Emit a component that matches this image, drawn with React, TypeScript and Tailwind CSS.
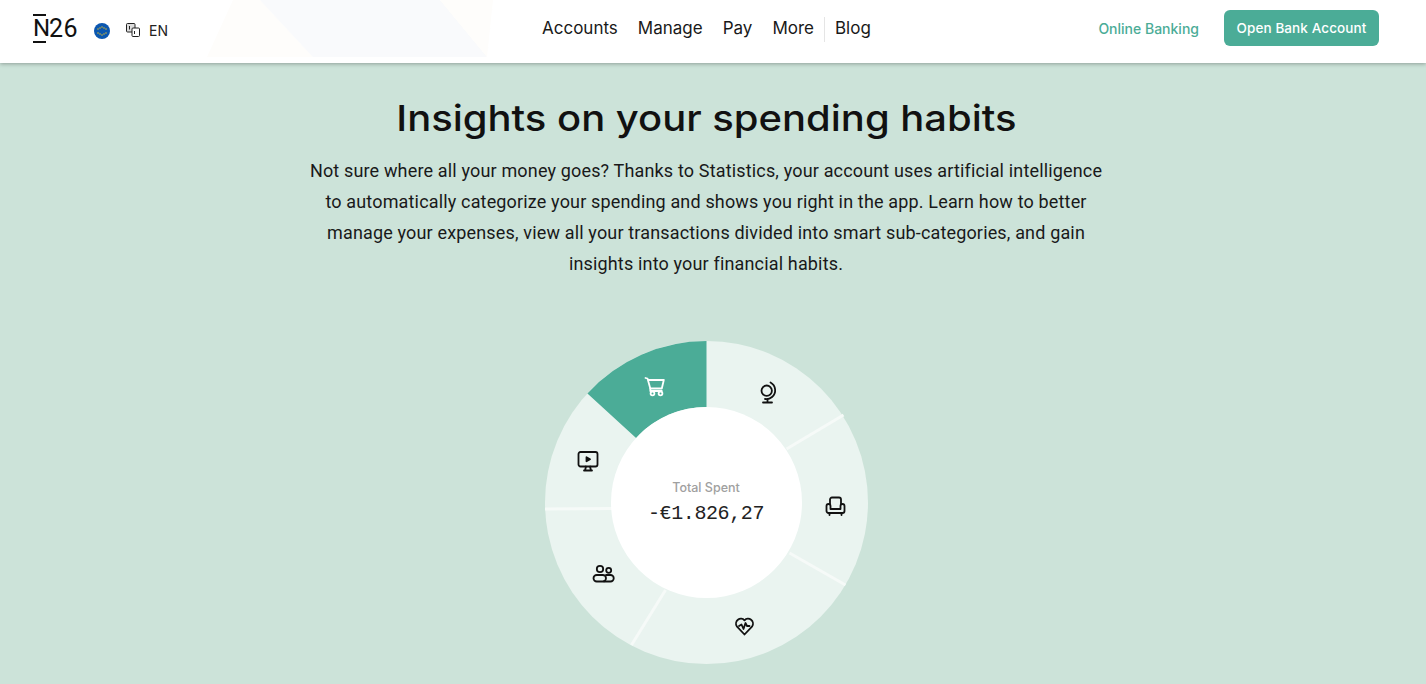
import { ReactNode } from "react"

const CX = 161.5
const CY = 161.5
const OUTER = 161.5
const INNER = 95.5

function pt(r: number, deg: number) {
    const a = ((deg - 90) * Math.PI) / 180
    return `${(CX + r * Math.cos(a)).toFixed(2)} ${(CY + r * Math.sin(a)).toFixed(2)}`
}

function wedge(from: number, to: number) {
    const large = to - from > 180 ? 1 : 0
    return `M${pt(OUTER, from)} A${OUTER} ${OUTER} 0 ${large} 1 ${pt(OUTER, to)} L${pt(INNER, to)} A${INNER} ${INNER} 0 ${large} 0 ${pt(INNER, from)} Z`
}

const dividers = [
    [298.5, 74, 241.5, 108],
    [300.5, 244, 244.5, 212],
    [86.5, 304, 120.5, 249],
    [0, 168, 67, 167.5],
]

function Donut() {
    return (
        <svg width="323" height="323" viewBox="0 0 323 323" className="block">
            <circle cx={CX} cy={CY} r={OUTER} fill="#eaf4f0" />
            <path d={wedge(312.5, 360)} fill="#4bac97" />
            {dividers.map((d) => (
                <line key={d[0]} x1={d[0]} y1={d[1]} x2={d[2]} y2={d[3]} stroke="#f6faf8" strokeWidth="3" />
            ))}
            <circle cx={CX} cy={CY} r={INNER} fill="#fff" />
        </svg>
    )
}

function Icon({ className, children }: { className: string; children: ReactNode }) {
    return (
        <svg
            width="26"
            height="26"
            viewBox="0 0 26 26"
            fill="none"
            stroke="currentColor"
            strokeWidth="1.8"
            strokeLinecap="round"
            strokeLinejoin="round"
            className={`absolute ${className}`}
        >
            {children}
        </svg>
    )
}

function EuFlag() {
    const stars = [-4, -2, 0, 2, 4]
    return (
        <svg width="16" height="16" viewBox="0 0 16 16">
            <circle cx="8" cy="8" r="8" fill="#0b57b0" />
            {stars.map((s) => (
                <g key={s} fill="#c9b53a">
                    <circle cx={8 + s} cy={s === 0 ? 4 : 8 - (4 - Math.abs(s)) / 2 - 2} r="0.8" />
                    <circle cx={8 + s} cy={s === 0 ? 12 : 8 + (4 - Math.abs(s)) / 2 + 2} r="0.8" />
                </g>
            ))}
        </svg>
    )
}

export default function App() {
    return (
        <div className="h-[684px] overflow-hidden bg-[#cce3d9] font-['Inter',sans-serif] text-[#111]">
            <header className="relative z-10 flex h-[63px] items-center bg-white pb-[7px] pl-[33px] pr-[47px] shadow-[0_1px_4px_rgba(0,0,0,0.3)]">
                <svg width="290" height="57" viewBox="0 0 290 57" className="absolute left-[207px] top-0">
                    <path d="M0 57 L26 0 H53 L106 57 Z" fill="#fefdfb" />
                    <path d="M53 0 L106 57 H280 L233 0 Z" fill="#f9fafc" />
                    <path d="M233 0 H286 L280 57 Z" fill="#fefdfb" />
                </svg>
                <div className="relative flex w-[509px] items-center">
                    <div className="flex items-center">
                        <span className="w-[13px] border-y-2 border-[#111] text-center font-['Roboto',sans-serif] text-[24px] leading-[25px]">N</span>
                        <span className="ml-[3px] font-['Roboto',sans-serif] text-[25px] leading-[25px] tracking-[0.5px]">26</span>
                    </div>
                    <span className="ml-[16px] mt-[6px] flex">
                        <EuFlag />
                    </span>
                    <svg width="14" height="14" viewBox="0 0 14 14" fill="none" stroke="#222" strokeWidth="1" className="ml-[16px] mt-[4px]">
                        <rect x="0.5" y="0.5" width="8.500" height="8.500" rx="1" fill="#ddd" />
                        <rect x="6" y="5" width="7.500" height="8.500" rx="1" fill="#fff" />
                        <path d="M3.500 3v3.500M8.500 8v3" />
                    </svg>
                    <span className="ml-[9px] mt-[4px] text-[14px] text-[#222]">EN</span>
                </div>
                <nav className="relative flex items-center pt-[2px] text-[17px] text-[#191919]">
                    <a>Accounts</a>
                    <a className="ml-[20px]">Manage</a>
                    <a className="ml-[20px]">Pay</a>
                    <a className="ml-[20px]">More</a>
                    <span className="ml-[10px] h-[25px] w-px bg-[#e5e5e5]" />
                    <a className="ml-[10px]">Blog</a>
                </nav>
                <div className="relative ml-auto flex items-center">
                    <a className="text-[14px] font-medium text-[#4bac97]">Online Banking</a>
                    <a className="ml-[25px] flex h-[36px] w-[155px] items-center justify-center rounded-[6px] bg-[#4bac97] text-[13.500px] font-medium tracking-[0.1px] text-white">
                        Open Bank Account
                    </a>
                </div>
            </header>

            <main className="flex flex-col items-center pr-[14px]">
                <h1 className="mt-[32px] origin-center scale-x-[1.11] text-[36px] leading-[46px] font-medium">
                    Insights on your spending habits
                </h1>
                <p className="mt-[14px] text-center font-['Roboto',sans-serif] text-[18px] leading-[31px] tracking-[0.16px] text-[#191919]">
                    Not sure where all your money goes? Thanks to Statistics, your account uses artificial intelligence
                    <br />
                    to automatically categorize your spending and shows you right in the app. Learn how to better
                    <br />
                    manage your expenses, view all your transactions divided into smart sub-categories, and gain
                    <br />
                    insights into your financial habits.
                </p>
                <div className="relative mt-[62px] h-[323px] w-[323px] text-[#111]">
                    <Donut />
                    <Icon className="left-[97px] top-[33px] text-white">
                        <path d="M3.500 4l2 .5 2.800 10h11.500l2-8.500H6" />
                        <path d="M8.300 14.500v2.500h11.500" />
                        <circle cx="10.500" cy="19.500" r="1.900" />
                        <circle cx="18.500" cy="19.500" r="1.900" />
                    </Icon>
                    <Icon className="left-[210px] top-[38px]">
                        <circle cx="11.700" cy="11.700" r="5.200" />
                        <path d="M15.500 3.500a8.800 8.800 0 0 1 1.500 14.500 8.800 8.800 0 0 1-7 2" />
                        <path d="M12.500 20v3M8 23.500h9" />
                    </Icon>
                    <Icon className="left-[278px] top-[153px]">
                        <path d="M7 10V5.500a2 2 0 0 1 2-2h7a2 2 0 0 1 2 2V10" />
                        <path d="M3.500 12a2 2 0 0 1 4 0v3h10v-3a2 2 0 0 1 4 0v5a2 2 0 0 1-2 2H5.500a2 2 0 0 1-2-2z" />
                        <path d="M6.500 19v2M18.500 19v2" />
                    </Icon>
                    <Icon className="left-[186px] top-[272px]">
                        <path d="M13.500 21.500L5.800 13.300a4.900 4.900 0 0 1 7.700-6 4.900 4.900 0 0 1 7.700 6z" />
                        <path d="M8 13l2.500-1.500 2 4.500 2-6 1.500 3h2.500" />
                    </Icon>
                    <Icon className="left-[46px] top-[220px]">
                        <circle cx="9" cy="8" r="3.200" />
                        <circle cx="17.700" cy="9.300" r="2.500" />
                        <rect x="2.500" y="14" width="12.500" height="6.500" rx="3.250" />
                        <path d="M15 14h4.500a3.250 3.250 0 0 1 0 6.500H13" />
                    </Icon>
                    <Icon className="left-[30px] top-[108px]">
                        <rect x="3.500" y="3" width="19" height="14.500" rx="2" />
                        <path d="M9 21.500h8M11 17.500l-1 4M15 17.500l1 4" />
                        <path d="M11.500 8.200l3.500 2-3.500 2z" fill="currentColor" />
                    </Icon>
                    <div className="absolute inset-0 flex flex-col items-center justify-center pt-[3px]">
                        <span className="text-[12.500px] leading-[16px] font-medium text-[#a0a0a0]">Total Spent</span>
                        <span className="mt-[4px] font-['Liberation_Mono',monospace] text-[20px] leading-[28px] tracking-[-0.4px] text-[#222]">
                            -€1.826,27
                        </span>
                    </div>
                </div>
            </main>
        </div>
    )
}
